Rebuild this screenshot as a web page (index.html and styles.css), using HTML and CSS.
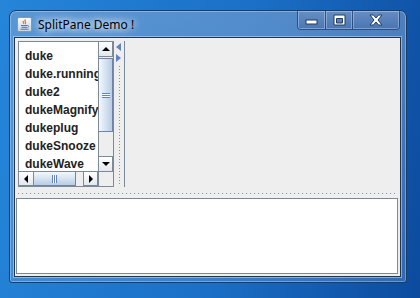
FILE: index.html
```html
<!DOCTYPE html>
<html lang="en">
<head>
    <meta charset="UTF-8">
    <title>SplitPane Demo !</title>
    <link rel="stylesheet" href="styles.css">
</head>
<body>
    <div class="window">
        <div class="titlebar">
            <svg class="app-icon" width="15" height="15" viewBox="0 0 15 15">
                <defs>
                    <linearGradient id="iconBg" x1="0" y1="0" x2="0" y2="1">
                        <stop offset="0" stop-color="#fbfbfb"/>
                        <stop offset="1" stop-color="#c9d2dc"/>
                    </linearGradient>
                </defs>
                <rect x="0.5" y="0.5" width="14" height="14" rx="1.5" fill="url(#iconBg)" stroke="#8797ab"/>
                <path d="M8.5 2.5c-2 1.5 1.5 2.5-0.5 4.5M6.5 4c-1 1 0.8 1.5-0.3 2.6" fill="none" stroke="#e2761b" stroke-width="1.3"/>
                <path d="M4 8.5h6.5M4.5 10.3h5.5M3.5 12.2h8" fill="none" stroke="#5576a6" stroke-width="1"/>
                <path d="M10.5 8.5c1.5 0 1.5 1.8 0 1.8" fill="none" stroke="#5576a6" stroke-width="0.9"/>
            </svg>
            <span class="title">SplitPane Demo !</span>
            <div class="caption-buttons">
                <div class="cap-btn cap-min">
                    <svg width="13" height="6" viewBox="0 0 13 6"><rect x="1" y="1" width="11" height="4" fill="#fff" stroke="#243c5e"/></svg>
                </div>
                <div class="cap-btn cap-max">
                    <svg width="13" height="12" viewBox="0 0 13 12"><path d="M1 1h11v10h-11z M3.5 4.5v4.5h6v-4.5z" fill="#fff" fill-rule="evenodd" stroke="#243c5e"/></svg>
                </div>
                <div class="cap-btn cap-close">
                    <svg width="14" height="12" viewBox="0 0 14 12"><path d="M1 1h3.5l2.5 3 2.5-3h3.5l-4 5 4 5h-3.5l-2.5-3-2.5 3h-3.5l4-5z" fill="#fff" stroke="#243c5e" stroke-linejoin="round"/></svg>
                </div>
            </div>
        </div>

        <div class="client">
            <div class="top-split">
                <div class="scroll-pane">
                    <div class="list-area">
                        <ul class="list">
                            <li>duke</li>
                            <li>duke.running</li>
                            <li>duke2</li>
                            <li>dukeMagnify</li>
                            <li>dukeplug</li>
                            <li>dukeSnooze</li>
                            <li>dukeWave</li>
                        </ul>
                        <div class="vscroll">
                            <div class="sb-btn sb-up"><span class="tri tri-up"></span></div>
                            <div class="vtrack">
                                <div class="vthumb"><span class="grip-h"></span></div>
                            </div>
                            <div class="sb-btn sb-down"><span class="tri tri-down"></span></div>
                        </div>
                    </div>
                    <div class="hscroll-row">
                        <div class="hscroll">
                            <div class="sb-btn sb-left"><span class="tri tri-left"></span></div>
                            <div class="htrack">
                                <div class="hthumb"><span class="grip-v"></span></div>
                            </div>
                            <div class="sb-btn sb-right"><span class="tri tri-right"></span></div>
                        </div>
                        <div class="corner"></div>
                    </div>
                </div>

                <div class="vdivider">
                    <span class="one-touch ot-left"></span>
                    <span class="one-touch ot-right"></span>
                    <span class="bumps-v"></span>
                </div>

                <div class="right-panel"></div>
            </div>

            <div class="hdivider"><span class="bumps-h"></span></div>

            <div class="bottom-pane"></div>
        </div>
    </div>
</body>
</html>
```
FILE: styles.css
```css
body {
    margin: 0;
    width: 420px;
    height: 298px;
    overflow: hidden;
    background: linear-gradient(100deg, #2585d9 0%, #1b6fc6 55%, #0c4b9e 100%);
    font-family: "Noto Sans", "DejaVu Sans", sans-serif;
}

/* window frame */
.window {
    box-sizing: border-box;
    width: 398px;
    height: 273px;
    margin: 10px 0 0 9px;
    border: 1px solid #1d3c63;
    border-radius: 7px 7px 3px 3px;
    background: linear-gradient(to bottom, rgba(140, 170, 210, 0.5), rgba(110, 160, 220, 0.35));
    box-shadow: inset 0 0 0 1px rgba(255, 255, 255, 0.3);
    display: flex;
    flex-direction: column;
}
.titlebar {
    height: 26px;
    display: flex;
    align-items: center;
    padding-left: 7px;
}
.app-icon {
    flex: none;
}
.title {
    margin-left: 6px;
    font-size: 12px;
    color: #000;
    text-shadow: 0 0 6px #fff, 0 0 10px rgba(255, 255, 255, 0.9), 0 0 16px rgba(255, 255, 255, 0.7);
}
.caption-buttons {
    margin-left: auto;
    margin-right: 6px;
    align-self: flex-start;
    display: flex;
    height: 18px;
    border: 1px solid rgba(20, 45, 85, 0.6);
    border-top: none;
    border-radius: 0 0 4px 4px;
    overflow: hidden;
}
.cap-btn {
    display: flex;
    align-items: center;
    justify-content: center;
    background: linear-gradient(to bottom, rgba(110, 145, 195, 0.75), rgba(70, 110, 170, 0.65));
    box-shadow: inset 0 0 0 1px rgba(190, 210, 240, 0.45);
}
.cap-btn + .cap-btn {
    border-left: 1px solid rgba(20, 45, 85, 0.6);
}
.cap-min {
    width: 27px;
    padding-top: 4px;
    box-sizing: border-box;
}
.cap-max {
    width: 26px;
}
.cap-close {
    width: 46px;
}

/* client area */
.client {
    flex: 1;
    margin: 0 5px 5px 4px;
    border: 1px solid #22354c;
    background: #eeeeee;
    box-shadow: 0 0 0 1px rgba(210, 230, 250, 0.5);
    display: flex;
    flex-direction: column;
}
.top-split {
    height: 147px;
    padding: 3px 0 0 3px;
    display: flex;
    align-items: flex-start;
}
.scroll-pane {
    width: 94px;
    height: 144px;
    border: 1px solid #7a8a99;
    display: flex;
    flex-direction: column;
    background: #fff;
}
.list-area {
    height: 129px;
    display: flex;
}
.list {
    flex: 1;
    margin: 0;
    padding: 5px 0 0 6px;
    list-style: none;
    overflow: hidden;
    font-family: "Liberation Sans", Arial, sans-serif;
    font-size: 12px;
    font-weight: bold;
    color: #222;
    white-space: nowrap;
}
.list li {
    height: 18px;
    line-height: 18px;
}

/* scrollbars */
.vscroll {
    width: 15px;
    display: flex;
    flex-direction: column;
    background: #eeeeee;
}
.sb-btn {
    box-sizing: border-box;
    flex: none;
    display: flex;
    align-items: center;
    justify-content: center;
    background: linear-gradient(to bottom, #ffffff, #e4e8ec);
    border: 1px solid #7a8a99;
}
.sb-up, .sb-down {
    height: 15px;
    width: 15px;
}
.sb-up {
    border-top: none;
}
.sb-down {
    border-bottom: none;
}
.sb-left, .sb-right {
    width: 15px;
    height: 15px;
}
.sb-left {
    border-left: none;
}
.vtrack {
    flex: 1;
    border-left: 1px solid #7a8a99;
    padding-top: 1px;
}
.vthumb {
    box-sizing: border-box;
    height: 74px;
    border: 1px solid #6d83a8;
    border-left: none;
    background: linear-gradient(to right, #f4f8fc, #dbe7f3 40%, #b9cde3);
    display: flex;
    align-items: center;
    justify-content: center;
}
.grip-h {
    width: 8px;
    height: 5px;
    background: repeating-linear-gradient(to bottom, #6382bf 0 1px, #ffffff 1px 2px);
}
.hscroll-row {
    height: 15px;
    display: flex;
}
.hscroll {
    flex: 1;
    display: flex;
    background: #eeeeee;
}
.htrack {
    flex: 1;
    border-top: 1px solid #7a8a99;
    padding-right: 7px;
}
.hthumb {
    box-sizing: border-box;
    height: 14px;
    border: 1px solid #6d83a8;
    border-top: none;
    border-left: none;
    background: linear-gradient(to bottom, #f4f8fc, #dbe7f3 40%, #b9cde3);
    display: flex;
    align-items: center;
    justify-content: center;
}
.grip-v {
    width: 5px;
    height: 8px;
    background: repeating-linear-gradient(to right, #6382bf 0 1px, #ffffff 1px 2px);
}
.corner {
    width: 15px;
    background: #eeeeee;
    border-top: 1px solid #7a8a99;
    border-left: 1px solid #7a8a99;
    box-sizing: border-box;
}
.tri {
    width: 0;
    height: 0;
    border: 4px solid transparent;
}
.tri-up {
    border-bottom-color: #000;
    border-top-width: 0;
}
.tri-down {
    border-top-color: #000;
    border-bottom-width: 0;
}
.tri-left {
    border-right-color: #000;
    border-left-width: 0;
}
.tri-right {
    border-left-color: #000;
    border-right-width: 0;
}

/* dividers */
.vdivider {
    width: 10px;
    height: 147px;
    display: flex;
    flex-direction: column;
    align-items: center;
}
.one-touch {
    width: 0;
    height: 0;
    border: 4px solid transparent;
    margin-left: -2px;
}
.ot-left {
    margin-top: 2px;
    border-right: 5px solid #6382bf;
    border-left-width: 0;
}
.ot-right {
    margin-top: 3px;
    border-left: 5px solid #6382bf;
    border-right-width: 0;
}
.bumps-v {
    width: 1px;
    flex: 1;
    margin-top: 4px;
    margin-bottom: 2px;
    margin-left: 1px;
    background: linear-gradient(to bottom, #8794a3 1px, transparent 1px) 0 0 / 1px 3px;
}
.right-panel {
    flex: 1;
    height: 146px;
    border-left: 1px solid #7a8a99;
}
.hdivider {
    height: 10px;
    display: flex;
    align-items: center;
    padding: 0 3px;
}
.bumps-h {
    flex: 1;
    height: 1px;
    background: linear-gradient(to right, #8794a3 1px, transparent 1px) 0 0 / 4px 1px;
}
.bottom-pane {
    flex: 1;
    margin: 0 2px 2px 1px;
    border: 1px solid #7a8a99;
    background: #fff;
}
```
